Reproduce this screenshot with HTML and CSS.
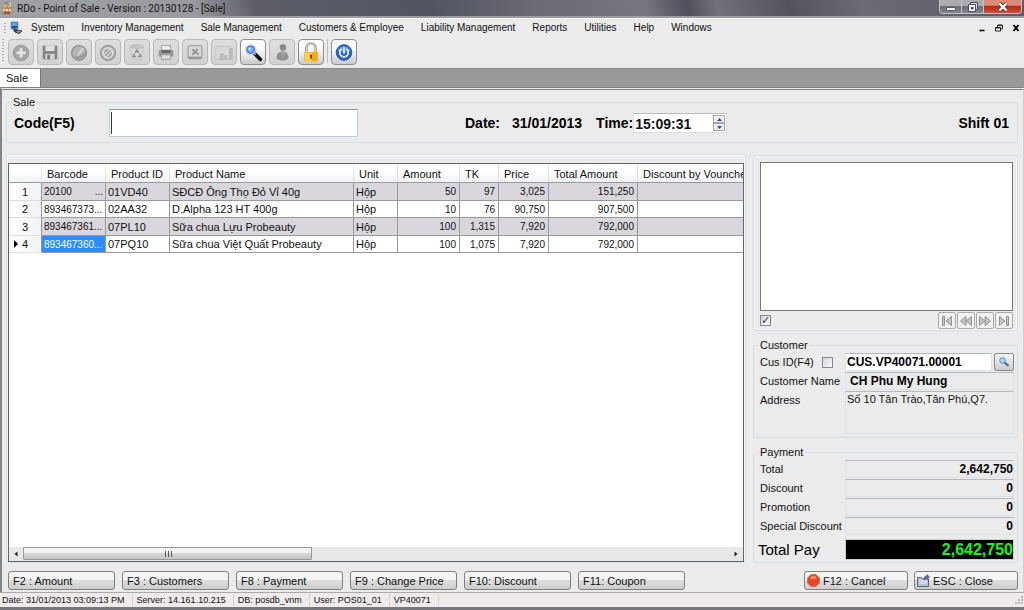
FILE: index.html
```html
<!DOCTYPE html>
<html lang="en">
<head>
<meta charset="utf-8">
<title>RDo - Point of Sale</title>
<link rel="stylesheet" href="styles.css">
</head>
<body>
<div class="app">
  <header class="titlebar">
    <svg class="app-icon" width="12" height="14" viewBox="0 0 12 14"><path d="M1 5h10v8.500H1z" fill="#b98961"/><path d="M2 3h3v3H2zM7 2h3v4H7z" fill="#e3c29c"/><path d="M3 5c0-4 5-4 5 0" fill="none" stroke="#8a5f42"/><path d="M2 8h2v2H2zM5 8h2v2H5zM8 8h2v2H8z" fill="#efd7b8"/><path d="M3 11h6v2H3z" fill="#8d5c3e"/></svg>
    <h1 class="title">RDo - Point of Sale - Version : 20130128 - [Sale]</h1>
    <div class="win-controls">
      <button class="win-btn" aria-label="Minimize"><svg width="12" height="10" viewBox="0 0 12 10"><path d="M1.500 5.500h9v3h-9z" fill="#fff" stroke="#555a66"/></svg></button>
      <button class="win-btn" aria-label="Restore"><svg width="12" height="12" viewBox="0 0 12 12"><path d="M3.500 1.500h7v7h-7z" fill="#ddd" stroke="#484c57"/><path d="M1.500 3.500h7v7h-7z" fill="#fff" stroke="#484c57"/><path d="M4 6h2.500v2.500H4z" fill="#484c57"/></svg></button>
      <button class="win-btn win-close" aria-label="Close window"><svg width="12" height="10" viewBox="0 0 12 10"><path d="M2.500 1.500l7 7M9.500 1.500l-7 7" stroke="#5b3838" stroke-width="4"/><path d="M2.500 1.500l7 7M9.500 1.500l-7 7" stroke="#fff" stroke-width="2.400"/></svg></button>
    </div>
  </header>

  <nav class="menubar">
    <span class="grip"></span>
    <svg class="menu-logo" width="13" height="13" viewBox="0 0 13 13"><path d="M1 1h7v7H1z" fill="#1b4f9c" stroke="#8fa3bd"/><path d="M2 2h5v3H2z" fill="#5ba2e8"/><path d="M3 8h4l1 2-4 1z" fill="#444"/><path d="M5 11c2-2 5-2 7-1l-3 2.500z" fill="#999" stroke="#333"/></svg>
    <button class="menu-item">System</button>
    <button class="menu-item">Inventory Management</button>
    <button class="menu-item">Sale Management</button>
    <button class="menu-item">Customers &amp; Employee</button>
    <button class="menu-item">Liability Management</button>
    <button class="menu-item">Reports</button>
    <button class="menu-item">Utilities</button>
    <button class="menu-item">Help</button>
    <button class="menu-item">Windows</button>
    <div class="mdi-controls">
      <button class="mdi-btn" aria-label="Minimize document"><svg width="8" height="8" viewBox="0 0 8 8"><path d="M1.500 6.500h5" stroke="#000" stroke-width="1.600"/></svg></button>
      <button class="mdi-btn" aria-label="Restore document"><svg width="8" height="8" viewBox="0 0 8 8"><path d="M2.500 3V1.500h5v3.500H6M2.500 1h5" fill="none" stroke="#222"/><path d="M.5 3.500h5v3.500h-5zM.5 4h5" fill="#fff" stroke="#222"/></svg></button>
      <button class="mdi-btn" aria-label="Close document"><svg width="8" height="8" viewBox="0 0 8 8"><path d="M1.500 1l5 6M6.500 1l-5 6" stroke="#000" stroke-width="1.800"/></svg></button>
    </div>
  </nav>

  <div class="toolbar">
    <span class="grip grip-tall"></span>
    <button class="tool off" aria-label="New"><svg viewBox="0 0 24 24"><circle cx="12" cy="13" r="8.500" fill="#a6a6a6" stroke="#959595"/><path d="M12 8v10M7 13h10" stroke="#e6e6e6" stroke-width="3"/></svg></button>
    <button class="tool off" aria-label="Save"><svg viewBox="0 0 24 24"><path d="M4 5h16v15H4z" fill="#868686"/><path d="M7 5h10v6H7z" fill="#e0e0e0"/><path d="M7 14h10v6H7z" fill="#d5d5d5"/><path d="M9 15h3v5H9z" fill="#777"/></svg></button>
    <button class="tool off" aria-label="Edit"><svg viewBox="0 0 24 24"><circle cx="12" cy="13" r="8" fill="#b5b5b5" stroke="#929292" stroke-width="1.500"/><path d="M6 17a7.500 7.500 0 0 0 13-5c-3 4-8 6-13 5z" fill="#969696"/><path d="M10 17c1-4 3-7 6-10l1.500 1.500c-2 3-4 6-7.500 8.500z" fill="#d8d8d8"/></svg></button>
    <button class="tool off" aria-label="Cancel edit"><svg viewBox="0 0 24 24"><circle cx="12" cy="13" r="8.500" fill="#aaa" stroke="#999"/><circle cx="12" cy="13" r="5.500" fill="none" stroke="#ddd" stroke-width="1.800"/><path d="M8 17l8-8" stroke="#ddd" stroke-width="4"/><path d="M9 16l6-6" stroke="#969696" stroke-width="1.500"/></svg></button>
    <button class="tool off" aria-label="Delete"><svg viewBox="0 0 24 24"><path d="M5 6h14l-2 14H7z" fill="#dadada" stroke="#c2c2c2"/><ellipse cx="12" cy="6" rx="7" ry="2" fill="#c9c9c9" stroke="#b6b6b6"/><path d="M10 13l2-3 2 3M15 14l1 3h-3M11 17H8l1-3" fill="none" stroke="#898989" stroke-width="1.600"/></svg></button>
    <button class="tool off" aria-label="Print"><svg viewBox="0 0 24 24"><path d="M7 5h10v5H7z" fill="#eee" stroke="#999"/><path d="M4 10h16v7H4z" fill="#9a9a9a"/><path d="M7 10h10v3H7z" fill="#666"/><path d="M7 15h10v5H7z" fill="#ddd" stroke="#999"/></svg></button>
    <button class="tool off" aria-label="Export"><svg viewBox="0 0 24 24"><rect x="4.500" y="5" width="15" height="14" rx="2" fill="#d8d8d8" stroke="#a6a6a6" stroke-width="1.500"/><path d="M5 17h14v3H5z" fill="#999"/><path d="M9 9l7 6M15 9l-6 6" stroke="#969696" stroke-width="2"/></svg></button>
    <button class="tool off" aria-label="Chart"><svg viewBox="0 0 24 24"><path d="M3 6h15v14H3z" fill="#d9d9d9" stroke="#c3c3c3"/><path d="M8 14h3v6H8zM13 16h2v4h-2zM18 8h3v12h-3z" fill="#bdbdbd" stroke="#b6b6b6"/></svg></button>
    <button class="tool" aria-label="Search"><svg viewBox="0 0 24 24"><path d="M14 14l6 6" stroke="#151515" stroke-width="4" stroke-linecap="round"/><path d="M13 13l2 2" stroke="#999" stroke-width="2"/><circle cx="9.500" cy="9.500" r="5" fill="#6fa6f7" stroke="#c4c8d2" stroke-width="2"/><circle cx="9.500" cy="9.500" r="4" fill="none" stroke="#3666cd"/><circle cx="8.500" cy="8.500" r="1.800" fill="#b9d8ff"/></svg></button>
    <button class="tool off" aria-label="User"><svg viewBox="0 0 24 24"><circle cx="13" cy="7" r="3.500" fill="#888"/><path d="M6 19c0-5 2-7 7-8 4 1 6 3 6 8-4 3-9 3-13 0z" fill="#929292"/><path d="M11 12l2 7 2-7z" fill="#ccc"/><path d="M13 12v5" stroke="#666"/></svg></button>
    <button class="tool" aria-label="Lock"><svg viewBox="0 0 24 24"><path d="M7 13V8c0-7 10-7 10 0v5" fill="none" stroke="#a3a59b" stroke-width="3"/><path d="M7 12V8c0-6 10-6 10 0v4" fill="none" stroke="#e2e2da"/><rect x="4.500" y="12" width="15" height="10" rx="1" fill="#f9a91b"/><path d="M5 12.500h8v9H5z" fill="#ffd05c"/><circle cx="12" cy="16" r="1.300" fill="#68400c"/><path d="M11.300 16h1.500v3.500h-1.500z" fill="#68400c"/></svg></button>
    <span class="tool-sep"></span>
    <button class="tool" aria-label="Exit"><svg viewBox="0 0 24 24"><circle cx="12" cy="12.500" r="8.500" fill="#2866d2" stroke="#194eb0"/><path d="M4.500 11a8 8 0 0 1 15 0c-4 2-10 2-15 0z" fill="#5b91e8"/><path d="M9 9a4.700 4.700 0 1 0 6 0M12 7v6" fill="none" stroke="#fff" stroke-width="1.700" stroke-linecap="round"/></svg></button>
  </div>

  <div class="tabs"><button class="tab">Sale</button></div>

  <main class="main">
    <fieldset class="group sale">
      <legend>Sale</legend>
      <label class="big code-label" for="code">Code(F5)</label>
      <input class="code-input" id="code" type="text">
      <span class="big date-label">Date:</span>
      <span class="big date-value">31/01/2013</span>
      <label class="big" for="time">Time:</label>
      <span class="time">
        <input class="time-input" id="time" type="text" value="15:09:31">
        <span class="spin">
          <button aria-label="Later"><svg width="5" height="3" viewBox="0 0 5 3"><path d="M0 3l2.500-3L5 3z" fill="#39498b"/></svg></button>
          <button aria-label="Earlier"><svg width="5" height="3" viewBox="0 0 5 3"><path d="M0 0l2.500 3L5 0z" fill="#39498b"/></svg></button>
        </span>
      </span>
      <span class="big shift">Shift 01</span>
    </fieldset>

    <div class="work">
      <section class="group grid-panel">
        <div class="grid">
          <div class="grid-view">
            <table>
              <colgroup><col class="c-row"><col class="c-code"><col class="c-code"><col class="c-name"><col class="c-unit"><col class="c-amount"><col class="c-tk"><col class="c-price"><col class="c-total"><col></colgroup>
              <thead>
                <tr><th></th><th>Barcode</th><th>Product ID</th><th>Product Name</th><th>Unit</th><th>Amount</th><th>TK</th><th>Price</th><th>Total Amount</th><th>Discount by Vounche</th></tr>
              </thead>
              <tbody>
                <tr><th scope="row">1</th><td class="code"><span class="cut"><span>20100</span><span>...</span></span></td><td>01VD40</td><td>SĐCĐ Ông Thọ Đỏ Vỉ 40g</td><td>Hộp</td><td class="num">50</td><td class="num">97</td><td class="num">3,025</td><td class="num">151,250</td><td></td></tr>
                <tr><th scope="row">2</th><td class="code">893467373...</td><td>02AA32</td><td>D.Alpha 123 HT 400g</td><td>Hộp</td><td class="num">10</td><td class="num">76</td><td class="num">90,750</td><td class="num">907,500</td><td></td></tr>
                <tr><th scope="row">3</th><td class="code">893467361...</td><td>07PL10</td><td>Sữa chua Lựu Probeauty</td><td>Hộp</td><td class="num">100</td><td class="num">1,315</td><td class="num">7,920</td><td class="num">792,000</td><td></td></tr>
                <tr class="current"><th scope="row">4</th><td class="code picked">893467360...</td><td>07PQ10</td><td>Sữa chua Việt Quất Probeauty</td><td>Hộp</td><td class="num">100</td><td class="num">1,075</td><td class="num">7,920</td><td class="num">792,000</td><td></td></tr>
              </tbody>
            </table>
          </div>
          <div class="scroll">
            <button class="scroll-btn" aria-label="Scroll left"><svg width="4" height="6" viewBox="0 0 4 6"><path d="M3.500 0.500v5L0.500 3z" fill="#222"/></svg></button>
            <div class="track"><div class="thumb"><svg width="8" height="6" viewBox="0 0 8 6"><path d="M1.500 0v6M4.500 0v6M7.500 0v6" stroke="#555"/></svg></div></div>
            <button class="scroll-btn" aria-label="Scroll right"><svg width="4" height="6" viewBox="0 0 4 6"><path d="M0.500 0.500v5l3-2.500z" fill="#222"/></svg></button>
          </div>
        </div>
      </section>

      <aside class="side">
        <section class="group list-panel">
          <div class="list"></div>
          <div class="list-bar">
            <input class="check" type="checkbox" aria-label="Show list" checked>
            <div class="pager">
              <button aria-label="First"><svg width="12" height="12" viewBox="0 0 12 12"><path d="M1.500 1.500h2v9h-2zM10.500 1.500v9L5 6z"/></svg></button>
              <button aria-label="Previous"><svg width="12" height="12" viewBox="0 0 12 12"><path d="M6 1.500v9L.5 6zM11.500 1.500v9L6 6z"/></svg></button>
              <button aria-label="Next"><svg width="12" height="12" viewBox="0 0 12 12"><path d="M.5 1.500v9L6 6zM6 1.500v9L11.500 6z"/></svg></button>
              <button aria-label="Last"><svg width="12" height="12" viewBox="0 0 12 12"><path d="M1.500 1.500v9L7 6zM8.500 1.500h2v9h-2z"/></svg></button>
            </div>
          </div>
        </section>

        <fieldset class="group form customer">
          <legend>Customer</legend>
          <div class="row">
            <div class="label"><label for="cus-id">Cus ID(F4)</label><input class="check" type="checkbox" aria-label="Lock customer"></div>
            <input class="field strong editable" id="cus-id" type="text" value="CUS.VP40071.00001">
            <button class="find" aria-label="Find customer"><svg width="12" height="12" viewBox="0 0 12 12"><path d="M6 6l4.500 4" stroke="#576a80" stroke-width="2"/><circle cx="4.500" cy="4.500" r="2.800" fill="#a9d8f7" stroke="#508bc2"/></svg></button>
          </div>
          <div class="row"><label class="label" for="cus-name">Customer Name</label><input class="field strong name" id="cus-name" type="text" value="CH Phu My Hung" readonly></div>
          <div class="row"><label class="label" for="address">Address</label><textarea class="field address" id="address" readonly>Số 10 Tân Trào,Tân Phú,Q7.</textarea></div>
        </fieldset>

        <fieldset class="group form payment">
          <legend>Payment</legend>
          <div class="row"><label class="label" for="total">Total</label><input class="field strong money" id="total" type="text" value="2,642,750" readonly></div>
          <div class="row"><label class="label" for="discount">Discount</label><input class="field strong money" id="discount" type="text" value="0" readonly></div>
          <div class="row"><label class="label" for="promotion">Promotion</label><input class="field strong money" id="promotion" type="text" value="0" readonly></div>
          <div class="row"><label class="label" for="special">Special Discount</label><input class="field strong money" id="special" type="text" value="0" readonly></div>
          <div class="row total-row"><label class="label total-label" for="pay">Total Pay</label><input class="total-pay" id="pay" type="text" value="2,642,750" readonly></div>
        </fieldset>
      </aside>
    </div>

    <div class="actions">
      <button class="action">F2 : Amount</button>
      <button class="action">F3 : Customers</button>
      <button class="action">F8 : Payment</button>
      <button class="action">F9 : Change Price</button>
      <button class="action">F10: Discount</button>
      <button class="action">F11: Coupon</button>
      <div class="actions-end">
        <button class="action"><svg width="13" height="13" viewBox="0 0 13 13"><path d="M4 .5h5L12.500 4v5L9 12.500H4L.5 9V4z" fill="#e8452a" stroke="#c9735c"/><path d="M4.500 2h4L10 5H3z" fill="#fb8b5b"/></svg>F12 : Cancel</button>
        <button class="action"><svg width="13" height="13" viewBox="0 0 13 13"><path d="M.5 3.500h4l1 1.500h6v7.500H.5z" fill="#bcc0d4" stroke="#596187"/><path d="M2 7h8M2 9h8" stroke="#e6e9f5"/><path d="M7 5c0-2 1-3 3-3V.5L12.500 3 10 5.500V4C9 4 8 4.500 7 6z" fill="#5d678f" stroke="#3d4568" stroke-width=".5"/></svg>ESC : Close</button>
      </div>
    </div>
  </main>

  <footer class="status">
    <span>Date: 31/01/2013 03:09:13 PM</span>
    <span>Server: 14.161.10.215</span>
    <span>DB: posdb_vnm</span>
    <span>User: POS01_01</span>
    <span>VP40071</span>
    <svg class="resize" width="9" height="9" viewBox="0 0 9 9"><path d="M6 1h2M6 4h2M3 4h2M6 7h2M3 7h2M0 7h2" stroke="#b9b5b5" stroke-width="2"/></svg>
  </footer>
</div>
</body>
</html>
```
FILE: styles.css
```css
* { box-sizing: border-box; }

body {
  margin: 0;
  background: #ebebeb;
  color: #111;
  font: 11px/14px "Liberation Sans", Arial, sans-serif;
}

button, input, textarea { margin: 0; font: inherit; color: inherit; border-radius: 0; }
button { padding: 0; border: 0; background: none; }
svg { display: block; flex: none; }

.app {
  display: flex;
  flex-direction: column;
  min-height: 100vh;
  border-bottom: 3px solid #77777c;
}

/* Title bar */
.titlebar {
  display: flex;
  align-items: center;
  height: 18px;
  padding: 0 2px 0 1px;
  border-bottom: 2px solid #9c9ca2;
  background: linear-gradient(75deg, #a0a1a4 0%, #999a9e 19%, #5d5e68 25%, #515462 42%, #6b6a74 52%, #777580 63%, #504f5b 67%, #73717b 70%, #53525d 77%, #6c6a75 84%, #5a5b65 100%);
}
.title { margin: 0 0 0 4px; font: 10px/15px Roboto, sans-serif; color: #151515; white-space: nowrap; }
.win-controls {
  display: flex;
  align-self: flex-start;
  margin-left: auto;
  border: 1px solid #c2c2c7;
  border-top: 0;
  border-radius: 0 0 4px 4px;
  overflow: hidden;
}
.win-btn {
  display: grid;
  place-items: center;
  width: 22px;
  height: 13px;
  border-right: 1px solid #c2c2c7;
  background: linear-gradient(#aaaab0 45%, #6c6d77 50%, #83848c);
}
.win-close { width: 37px; border-right: 0; background: linear-gradient(#d98a78 40%, #b92a14 50%, #cc5138); }

/* Menu bar */
.menubar { display: flex; align-items: center; height: 20px; padding: 0 4px 2px; border-top: 1px solid #fafafa; }
.grip { width: 2px; height: 10px; background: repeating-linear-gradient(#aaa 0 1px, transparent 1px 3px); }
.grip-tall { height: 22px; margin-right: 1px; }
.menu-logo { margin: 0 0 0 4px; }
.menu-item { padding: 0 8px; font-size: 10px; line-height: 16px; white-space: nowrap; }
.menu-item + .menu-item { margin-left: 1px; }
.mdi-controls { display: flex; gap: 9px; margin-left: auto; }

/* Tool bar */
.toolbar { display: flex; align-items: flex-start; gap: 3px; height: 30px; padding: 1px 2px; }
.tool {
  display: grid;
  place-items: center;
  width: 26px;
  height: 26px;
  border: 1px solid #8e8e8e;
  border-radius: 4px;
  background: linear-gradient(#fcfcfc 30%, #ececec 60%, #c9c9c9);
}
.tool svg { width: 22px; height: 22px; }
.off { border-color: #b9b9b9; background: linear-gradient(#dedede, #d2d2d2); }
.tool-sep { width: 1px; height: 24px; background: #bdbdbd; }

/* Document tabs */
.tabs { height: 19px; border-top: 1px solid #8b8b8b; background: #999; }
.tab { width: 41px; height: 18px; padding: 0 0 0 6px; border-right: 1px solid #777; background: #fff; text-align: left; }

/* Document */
.main {
  display: flex;
  flex: 1;
  flex-direction: column;
  padding: 5px 5px 2px 4px;
  border-left: 2px solid #848484;
  border-right: 1px solid #d0d0d0;
  border-top: 3px double #808080;
}
.group { min-width: 0; margin: 0; padding: 0; border: 1px solid #d3dee6; border-radius: 3px; box-shadow: inset 0 0 0 1px #f4f6f7; }
fieldset.group { box-shadow: none; }
legend { padding: 0 2px; margin-left: 4px; line-height: 14px; }

.sale { display: flex; align-items: center; height: 48px; padding: 0 8px 4px 7px; }
.sale legend { margin-left: -3px; }
.big { font-size: 14px; font-weight: bold; line-height: 18px; color: #000; white-space: nowrap; }
.code-label { width: 95px; }
.code-input {
  width: 249px;
  height: 28px;
  padding: 0 1px;
  border: 1px solid #b5cfe7;
  border-top-color: #7f9db9;
  background: #fff linear-gradient(#333, #333) 1px 2px / 1px 22px no-repeat;
  font-size: 18px;
  outline: 0;
}
.date-label { margin-left: 107px; }
.date-value { margin: 0 14px 0 12px; }
.time { display: flex; width: 94px; height: 20px; border: 1px solid #ddd; border-top-color: #bbb; background: #fff; }
.time-input { flex: 1; min-width: 0; padding: 2px 1px 0; border: 0; background: none; font-size: 14px; font-weight: bold; outline: 0; }
.spin { display: flex; flex-direction: column; width: 12px; margin: 1px; }
.spin button { display: grid; flex: 1; place-items: center; border: 1px solid #a6a6a6; background: #eee; }
.shift { margin-left: auto; }

.work { display: grid; flex: 1; grid-template-columns: minmax(0, 1fr) 265px; gap: 7px; margin-top: 11px; }

/* Product grid */
.grid-panel { display: flex; padding: 8px 1px 0 1px; }
.grid { display: flex; flex: 1; flex-direction: column; min-width: 0; border: 1px solid #666; background: #fff; }
.grid-view { flex: 1; overflow: hidden; }
table { width: 100%; border-collapse: separate; border-spacing: 0; table-layout: fixed; }
.c-row { width: 33px; }
.c-code { width: 64px; }
.c-name { width: 184px; }
.c-unit { width: 44px; }
.c-amount { width: 62px; }
.c-tk { width: 39px; }
.c-price { width: 50px; }
.c-total { width: 89px; }
th, td { height: 18px; padding: 0 2px; overflow: hidden; font-weight: normal; line-height: 16px; text-align: left; white-space: nowrap; }
td { border-right: 1px solid #999; border-bottom: 1px solid #999; }
thead th { height: 19px; padding: 1px 0 0 5px; border-right: 1px solid #e0e2e6; border-bottom: 1px solid #999; background: linear-gradient(#fff 40%, #f1f2f5); }
tbody th { position: relative; padding-left: 13px; border-right: 1px solid #999; border-bottom: 1px solid #ddd; background: linear-gradient(90deg, #fff, #f1f2f5); }
tr > :last-child { border-right: 0; }
tbody tr:nth-child(odd) td { background: #d9d7dd; }
tbody tr:nth-child(even) > * { height: 17px; line-height: 15px; }
tbody tr:nth-child(even) .picked { background: #2a8cff; color: #fff; }
.current th::before { content: ""; position: absolute; left: 5px; top: 4px; border: 4px solid transparent; border-left-color: #000; border-right: 0; }
.num, .code { font-size: 10px; }
.num { padding-right: 3px; text-align: right; }
.cut { display: flex; justify-content: space-between; }

.scroll { display: flex; height: 14px; background: #e8e8e8; }
.scroll-btn { display: grid; place-items: center; width: 14px; }
.track { flex: 1; }
.thumb { display: grid; place-items: center; width: 41%; height: 13px; border: 1px solid #999; border-radius: 1px; background: linear-gradient(#f4f4f4 45%, #d7d7d7 50%, #c5c5c5); }

/* Side column */
.side { display: flex; flex-direction: column; gap: 7px; }
.list-panel { display: flex; flex: 1; flex-direction: column; margin-top: 1px; padding: 6px 4px 0 6px; }
.list { flex: 1; border: 1px solid #777; background: #fff; }
.list-bar { display: flex; align-items: center; height: 19px; }
.check {
  appearance: none;
  width: 11px;
  height: 11px;
  border: 1px solid #888;
  background: linear-gradient(135deg, #d3d5d8, #fbfbfb);
}
.check:checked::before { content: "✓"; display: block; font: bold 11px/9px "DejaVu Sans", sans-serif; color: #263a86; }
.pager { display: flex; gap: 1px; margin-left: auto; }
.pager button { display: grid; place-items: center; width: 18px; height: 17px; border: 1px solid #aaa; border-radius: 2px; background: #f1f1f1; }
.pager svg { fill: #c5c5c5; stroke: #929292; }

.form { display: flex; flex-direction: column; padding: 1px 3px 2px 6px; }
.form legend { margin-left: -2px; }
.row { display: flex; min-height: 18px; margin-bottom: 1px; }
.label { display: flex; align-items: center; flex: none; justify-content: space-between; width: 85px; padding-right: 12px; white-space: nowrap; }
.payment .label { padding-right: 0; }
.customer .label { align-self: flex-start; height: 18px; }
.field { flex: 1; min-width: 0; height: 18px; padding: 0 1px; border: 1px solid #dce3e8; border-top-color: #b4b8bf; background: #ebebeb; outline: 0; }
.strong { font-size: 12px; font-weight: bold; color: #000; }
.editable { background: #fff; }
.name { padding-left: 4px; }
.address { height: 43px; resize: none; overflow: hidden; }
.find { display: grid; place-items: center; width: 20px; margin-left: 2px; border: 1px solid #888; border-radius: 2px; background: linear-gradient(#f5f5f5, #ccc); }
.money { padding: 0; text-align: right; }
.total-row { margin: 3px 0 0 -2px; }
.payment .total-label { width: 87px; font-size: 15px; color: #000; }
.total-pay { flex: 1; min-width: 0; height: 21px; padding: 0; border: 1px solid #c9ced2; background: #000; color: #19f51e; font-size: 16px; font-weight: bold; text-align: right; outline: 0; }

/* Bottom buttons */
.actions { display: flex; gap: 7px; margin-top: 8px; padding-left: 2px; }
.action {
  display: flex;
  align-items: center;
  width: 107px;
  height: 19px;
  padding: 0 4px;
  border: 1px solid #808080;
  border-radius: 3px;
  background: linear-gradient(#f4f4f4 45%, #dedede 50%, #cdcdcd);
  white-space: nowrap;
}
.actions-end { display: flex; gap: 6px; margin-left: auto; }
.actions-end .action { width: 104px; gap: 3px; padding: 0 2px; }

/* Status bar */
.status { display: flex; align-items: center; height: 15px; border-top: 1px solid #aaa; background: #efebeb; font-size: 9px; line-height: 12px; }
.status span { padding: 0 7px 0 2px; border-right: 1px solid #d6d2d2; white-space: nowrap; }
.status span + span { padding-left: 4px; }
.resize { margin-left: auto; }
```
